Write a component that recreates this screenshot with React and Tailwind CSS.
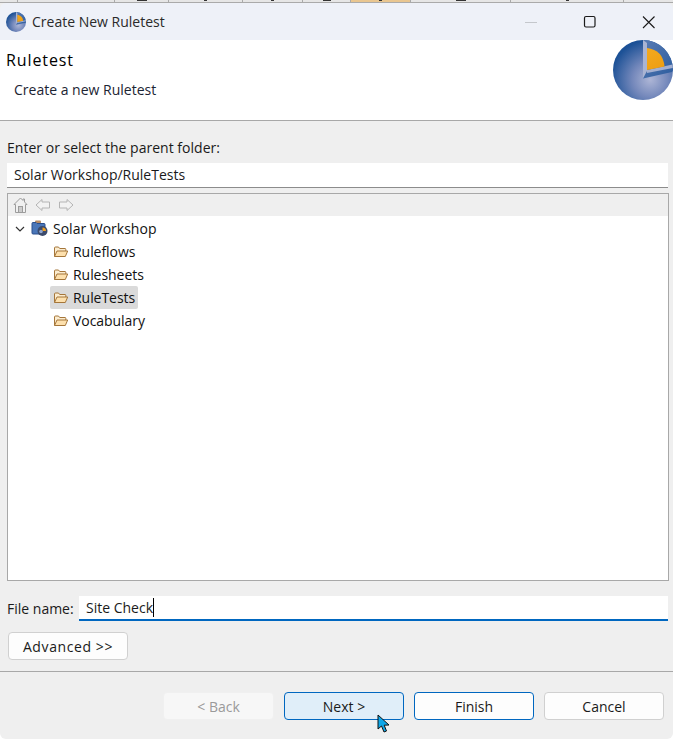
import { useId } from "react";

const font = { fontFamily: '"Open Sans", "Noto Sans", sans-serif' };

// tabs of the window behind the dialog, only their lower edge is visible
const backTabs = [
  { w: 18 },
  { w: 97 },
  { w: 54, mark: "w-[10px]" },
  { w: 74, mark: "w-[3px]" },
  { w: 60, mark: "w-[3px]" },
  { w: 48, mark: "w-[8px]" },
  { w: 60, mark: "w-[3px]", orange: true },
  { w: 100, mark: "w-[10px]" },
  { w: 113, mark: "w-[3px]" },
];

function SphereLogo({ size, className }) {
  const id = useId();
  return (
    <svg width={size} height={size} viewBox="0 0 60 60" className={className}>
      <defs>
        <radialGradient id={id + "b"} cx="0.62" cy="0.66" r="0.66">
          <stop offset="0" stopColor="#aeb6d6" />
          <stop offset="0.45" stopColor="#7488bb" />
          <stop offset="1" stopColor="#1c5196" />
        </radialGradient>
        <linearGradient id={id + "w"} x1="0" y1="0" x2="1" y2="1">
          <stop offset="0" stopColor="#5a7cb4" />
          <stop offset="1" stopColor="#2b5c9e" />
        </linearGradient>
        <linearGradient id={id + "o"} x1="0" y1="0" x2="0.5" y2="1">
          <stop offset="0" stopColor="#f4a91f" />
          <stop offset="1" stopColor="#ee9f12" />
        </linearGradient>
      </defs>
      <circle cx="30" cy="30" r="30" fill={`url(#${id}b)`} />
      <path d="M30 0A30 30 0 0 1 60 30L59 32 30 38.5Z" fill={`url(#${id}w)`} />
      <path d="M30 0 34 3V31L30 38.5Z" fill="#a9b4d3" />
      <path d="M34 30 59.5 24.5 59.8 28 34 33Z" fill="#a3afd0" />
      <path d="M34 8Q50 10 51.5 26.5L34 30Z" fill={`url(#${id}o)`} />
    </svg>
  );
}

function FolderIcon() {
  return (
    <svg width="16" height="16" viewBox="0 0 16 16" className="shrink-0">
      <path d="M1.5 12.5V4a1 1 0 0 1 1-1h3l1.2 1.5h5.3a.8.8 0 0 1 .8.8V7" fill="#fbeccf" stroke="#a5763a" />
      <path d="M1.5 12.5 4 7h10.7l-2.4 5.5Z" fill="#fde0ad" stroke="#a5763a" strokeLinejoin="round" />
    </svg>
  );
}

function ProjectIcon() {
  return (
    <svg width="17" height="17" viewBox="0 0 17 17" className="shrink-0">
      <rect x="4" y="0.5" width="6" height="3" rx="1" fill="#b68a63" />
      <path d="M1 3.5a1 1 0 0 1 1-1h3l1 1h7a1 1 0 0 1 1 1V14H2a1 1 0 0 1-1-1Z" fill="#4a76b8" stroke="#2a4e8c" />
      <circle cx="11.5" cy="11" r="5" fill="#3b4a6b" />
      <path d="M11.5 7.5a3.5 3.5 0 0 1 3.5 3.5h-3.5Z" fill="#f0a020" />
      <circle cx="10" cy="11.5" r="1.8" fill="#8fa4cf" />
    </svg>
  );
}

function NavToolbar() {
  return (
    <div className="h-[22px] bg-[#efefef] flex items-center pl-[5px] gap-[7px]">
      <svg width="15" height="17" viewBox="0 0 15 17">
        <path d="M7.5 1 1 7.5h1.5v8h10v-8H14L11.5 5V2H10v1.5Z" fill="#f0f0f0" stroke="#9c9c9c" />
        <rect x="5.5" y="9.5" width="4" height="6" fill="#cccccc" stroke="#9c9c9c" />
      </svg>
      <svg width="16" height="14" viewBox="0 0 16 14">
        <path d="M7 1.5 1 7l6 5.5V10h7.5V4H7Z" fill="#f2f2f2" stroke="#b4b4b4" strokeLinejoin="round" />
      </svg>
      <svg width="16" height="14" viewBox="0 0 16 14">
        <path d="M9 1.5 15 7l-6 5.5V10H1.5V4H9Z" fill="#f2f2f2" stroke="#b4b4b4" strokeLinejoin="round" />
      </svg>
    </div>
  );
}

function FolderRow({ label, selected }) {
  return (
    <div
      className={`h-[23px] ml-[42px] pl-[3px] pr-[3px] w-fit flex items-center gap-[4px] rounded-[2px] ${
        selected ? "bg-[#dadada]" : ""
      }`}
    >
      <FolderIcon />
      <span className="text-[#111111] tracking-[-0.05px]">{label}</span>
    </div>
  );
}

function DialogButton({ label, className }) {
  return (
    <button
      className={`h-[28px] rounded-[4px] border text-[14px] flex items-center justify-center ${className}`}
    >
      {label}
    </button>
  );
}

export default function App() {
  return (
    <div style={font} className="w-[673px] h-[745px] bg-white flex flex-col text-[14px] text-[#1a1a1a] overflow-hidden">
      <div className="h-[3px] bg-[#e6e6e6] border-b border-[#aaaaaa] flex shrink-0">
        {backTabs.map((t, i) => (
          <div
            key={i}
            style={{ width: t.w }}
            className={`border-r border-[#aaaaaa] flex justify-center ${t.orange ? "bg-[#e9c690]" : ""}`}
          >
            {t.mark && <div className={`h-[1px] bg-[#333333] ${t.mark}`} />}
          </div>
        ))}
      </div>

      <div className="h-[736px] rounded-b-[6px] bg-[#efefef] flex flex-col shrink-0">
        {/* title bar */}
        <div className="h-[37px] bg-[#eef1f8] rounded-t-[6px] flex items-center pl-[6px] shrink-0">
          <SphereLogo size={20} />
          <span className="ml-[6px] text-[#2a2a2a]">Create New Ruletest</span>
          <div className="ml-auto flex items-center">
            <svg width="14" height="14" viewBox="0 0 14 14" className="mr-[45px]">
              <path d="M1 7.5h12" stroke="#c4c7cc" strokeWidth="1" />
            </svg>
            <svg width="14" height="14" viewBox="0 0 14 14" className="mr-[45px]">
              <rect x="1.5" y="1.5" width="10.5" height="10.5" rx="1.5" fill="none" stroke="#1a1a1a" strokeWidth="1.2" />
            </svg>
            <svg width="14" height="14" viewBox="0 0 14 14" className="mr-[17px]">
              <path d="M1 1.5 12.5 13M12.5 1.5 1 13" stroke="#1a1a1a" strokeWidth="1.1" fill="none" />
            </svg>
          </div>
        </div>

        {/* wizard header */}
        <div className="h-[81px] bg-white border-b border-[#a8a8a8] relative shrink-0">
          <div className="pl-[6px] pt-[9px] text-[16px] tracking-[0.9px] leading-[22px] text-black font-medium">Ruletest</div>
          <div className="pl-[14px] pt-[9px] leading-[20px] text-[#1c2433]">Create a new Ruletest</div>
          <SphereLogo size={60} className="absolute right-0 top-0" />
        </div>

        {/* body */}
        <div className="flex-1 flex flex-col pl-[7px] pr-[4px] pt-[17px]">
          <div className="leading-[20px] text-[#1a1a1a] tracking-[0.02px]">Enter or select the parent folder:</div>
          <div className="mt-[5px] mr-[1px] h-[25px] bg-white border-b border-[#8c8c8c] pl-[7px] leading-[24px] text-[#1a1a1a]">
            Solar Workshop/RuleTests
          </div>

          <div className="mt-[5px] h-[388px] bg-white border border-[#a8a8a8] flex flex-col">
            <NavToolbar />
            <div className="h-[23px] mt-[1px] flex items-center">
              <svg width="10" height="10" viewBox="0 0 10 10" className="ml-[7px]">
                <path d="M1 3 5 7 9 3" fill="none" stroke="#333333" strokeWidth="1.2" />
              </svg>
              <span className="ml-[6px]">
                <ProjectIcon />
              </span>
              <span className="ml-[5px] text-[#111111]">Solar Workshop</span>
            </div>
            <FolderRow label="Ruleflows" />
            <FolderRow label="Rulesheets" />
            <FolderRow label="RuleTests" selected />
            <FolderRow label="Vocabulary" />
          </div>

          <div className="mt-[15px] mr-[1px] flex items-center h-[25px]">
            <span className="w-[72px] text-[#1a1a1a]">File name:</span>
            <div className="flex-1 h-[25px] bg-white border-b-2 border-[#0067c0] pl-[7px] leading-[23px] flex items-start">
              <span>Site Check</span>
              <span className="w-px h-[19px] mt-[2px] bg-black" />
            </div>
          </div>

          <DialogButton
            label="Advanced >>"
            className="w-[120px] mt-[11px] ml-[1px] bg-[#fdfdfd] border-[#d0d0d0] text-[#1a1a1a] tracking-[0.6px]"
          />
        </div>

        {/* footer */}
        <div className="border-t border-[#a8a8a8] mt-[10px] h-[68px] shrink-0 flex justify-end gap-[10px] pt-[20px] pr-[9px] relative">
          <DialogButton label="< Back" className="w-[111px] bg-[#f7f7f7] border-[#f0f0f0] text-[#9a9a9a]" />
          <DialogButton label="Next >" className="w-[120px] bg-[#e0eef9] border-[#0067c0]" />
          <DialogButton label="Finish" className="w-[120px] bg-[#fdfdfd] border-[#0067c0]" />
          <DialogButton label="Cancel" className="w-[120px] bg-[#fdfdfd] border-[#d0d0d0]" />
          {/* mouse pointer */}
          <svg width="14" height="20" viewBox="0 0 14 20" className="absolute left-[377px] top-[42px]">
            <path d="M1 1 1 15 4.5 12 7 18 9.5 17 7.2 11.2 12 11Z" fill="#0fa7e8" stroke="#111111" strokeWidth="1" strokeLinejoin="round" />
          </svg>
        </div>
      </div>
    </div>
  );
}
